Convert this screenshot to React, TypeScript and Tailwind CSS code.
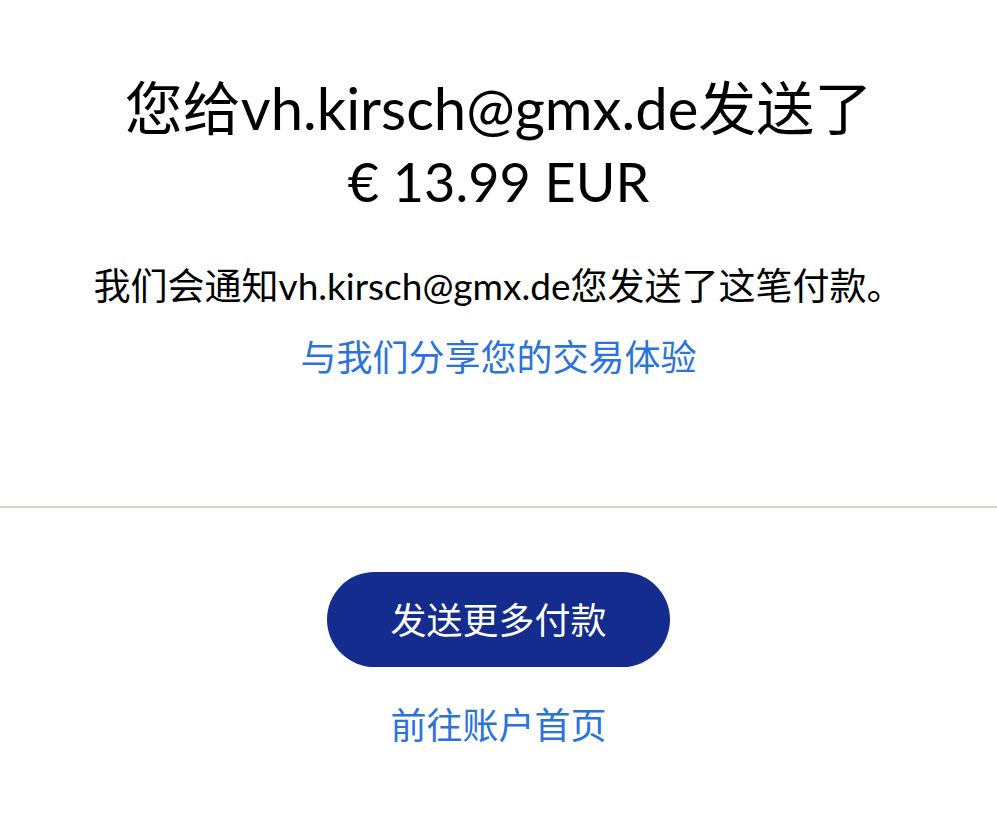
import React from 'react';

const FONT = "font-['Lato','Noto_Sans_CJK_SC',sans-serif]";

export default function App() {
  const email = 'vh.kirsch@gmx.de';

  return (
    <div className={`min-h-screen bg-white text-black ${FONT}`}>
      {/* Confirmation */}
      <div className="flex flex-col items-center pt-[70px] pb-[126px] text-center">
        <h1 className="flex flex-col items-center font-normal">
          <span className="text-[58px] leading-[76px]">您给{email}发送了</span>
          <span className="text-[54px] leading-[72px]">€ 13.99 EUR</span>
        </h1>
        <p className="mt-[44px] text-[37px] leading-[48px]">
          我们会通知{email}您发送了这笔付款。
        </p>
        <a href="#" className="mt-[24px] text-[36px] leading-[46px] text-[#2a73dc]">
          与我们分享您的交易体验
        </a>
      </div>

      <div className="h-[2px] bg-[#d6d3ca]" />

      {/* Actions */}
      <div className="flex flex-col items-center pt-[64px]">
        <button className="w-[343px] h-[95px] rounded-full bg-[#142c8e] text-white text-[36px]">
          发送更多付款
        </button>
        <a href="#" className="mt-[34px] text-[36px] leading-[48px] text-[#2a73dc]">
          前往账户首页
        </a>
      </div>
    </div>
  );
}
